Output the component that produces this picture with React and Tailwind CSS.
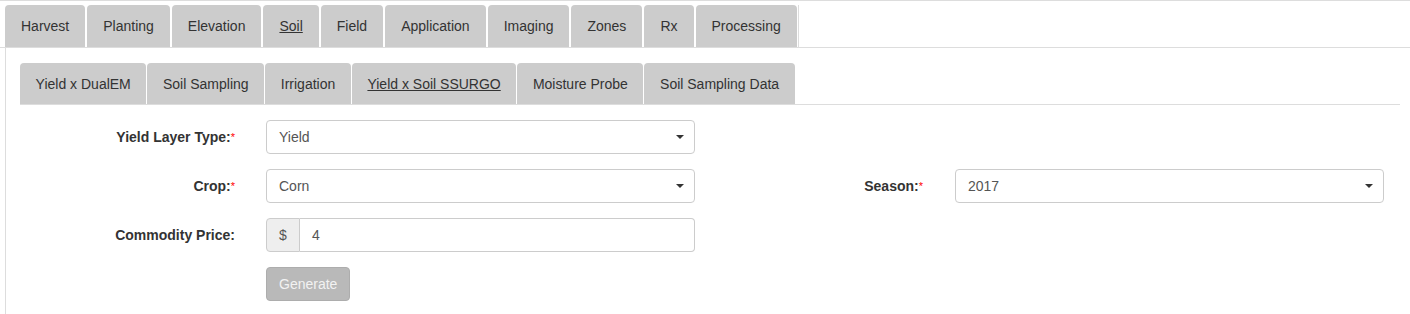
const mainTabs = ["Harvest", "Planting", "Elevation", "Soil", "Field", "Application", "Imaging", "Zones", "Rx", "Processing"];
const subTabs = ["Yield x DualEM", "Soil Sampling", "Irrigation", "Yield x Soil SSURGO", "Moisture Probe", "Soil Sampling Data"];

function Caret() {
  return (
    <span className="absolute right-[10px] top-1/2 -translate-y-1/2 w-0 h-0 border-l-[4px] border-r-[4px] border-t-[4px] border-l-transparent border-r-transparent border-t-[#333]" />
  );
}

function Select({ value }) {
  return (
    <div className="relative w-[429px] h-[34px] border border-[#ccc] rounded-[4px] bg-white flex items-center pl-[12px] text-[#555]">
      {value}
      <Caret />
    </div>
  );
}

function Label({ text, required, w = "w-[246px]", pr = "pr-[31px]" }) {
  return (
    <div className={`${w} ${pr} shrink-0 text-right font-bold text-[#333]`}>
      {text}
      {required && <sup className="text-[red] font-normal text-[11px] relative -top-[1px]">*</sup>}
    </div>
  );
}

export default function App() {
  return (
    <div className="font-['Liberation_Sans',Arial,sans-serif] text-[14px] leading-[20px] text-[#333] bg-white border-t border-[#ddd] h-[314px] overflow-hidden">
      <div className="flex pl-[5px] pt-[4px] border-b border-[#ddd]">
        {mainTabs.map((t) => (
          <div
            key={t}
            className={`bg-[#ccc] rounded-t-[4px] px-[16px] h-[42px] flex items-center mr-[2px] ${t === "Soil" ? "underline" : ""}`}
          >
            {t}
          </div>
        ))}
        <div className="w-px bg-[#ddd] -ml-px" />
      </div>

      <div className="ml-[5px] border-l border-[#ddd] pl-[14px] pr-[10px] pt-[15px] h-[300px]">
        <div className="flex border-b border-[#ddd] gap-px">
          {subTabs.map((t) => (
            <div
              key={t}
              className={`bg-[#ccc] rounded-t-[4px] px-[15.6px] h-[41px] flex items-center ${t === "Yield x Soil SSURGO" ? "underline" : ""}`}
            >
              {t}
            </div>
          ))}
        </div>

        <div className="flex flex-col gap-[15px] mt-[15px]">
          <div className="flex items-center">
            <Label text="Yield Layer Type:" required />
            <Select value="Yield" />
          </div>

          <div className="flex items-center">
            <Label text="Crop:" required />
            <Select value="Corn" />
            <Label text="Season:" required w="w-[260px]" pr="pr-[32px]" />
            <Select value="2017" />
          </div>

          <div className="flex items-center">
            <Label text="Commodity Price:" />
            <div className="flex w-[429px] h-[34px]">
              <div className="w-[34px] bg-[#eee] border border-[#ccc] rounded-l-[4px] flex items-center justify-center text-[#555]">
                $
              </div>
              <div className="flex-1 border border-l-0 border-[#ccc] rounded-r-[4px] flex items-center pl-[12px] text-[#555]">
                4
              </div>
            </div>
          </div>

          <div className="flex items-center">
            <div className="w-[246px] shrink-0" />
            <button
              type="button"
              disabled
              className="h-[34px] px-[12px] bg-[#b9b9b9] border border-[#adadad] rounded-[4px] text-[#f2f2f2]"
            >
              Generate
            </button>
          </div>
        </div>
      </div>
    </div>
  );
}
